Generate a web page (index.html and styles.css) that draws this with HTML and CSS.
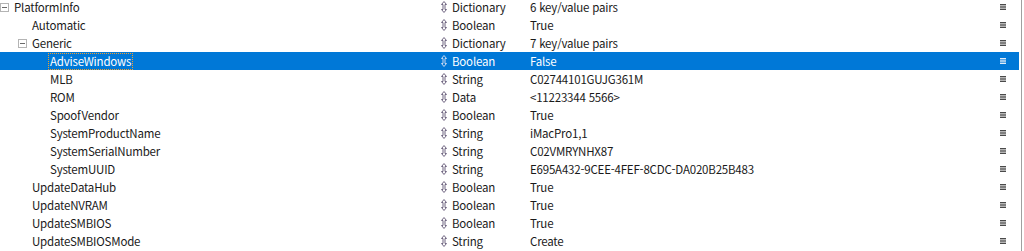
FILE: index.html
```html
<!DOCTYPE html>
<html lang="ko">
<head>
    <meta charset="UTF-8">
    <title>config.plist</title>
    <link rel="stylesheet" href="styles.css">
</head>
<body>
    <div class="tree" id="tree"></div>

    <svg width="0" height="0" class="defs">
        <symbol id="updown" viewBox="0 0 6 12">
            <path d="M3 0.5 L5.5 3.5 L4 3.5 L4 8.5 L5.5 8.5 L3 11.5 L0.5 8.5 L2 8.5 L2 3.5 L0.5 3.5 Z" fill="none" stroke="currentColor" stroke-width="1"/>
        </symbol>
        <symbol id="menu" viewBox="0 0 6 6">
            <rect x="0" y="0" width="6" height="1.4" fill="currentColor"/>
            <rect x="0" y="2.3" width="6" height="1.4" fill="currentColor"/>
            <rect x="0" y="4.6" width="6" height="1.4" fill="currentColor"/>
        </symbol>
    </svg>

    <script>
        const rows = [
            { key: 'PlatformInfo', level: 0, open: true, type: 'Dictionary', value: '6 key/value pairs' },
            { key: 'Automatic', level: 1, type: 'Boolean', value: 'True' },
            { key: 'Generic', level: 1, open: true, type: 'Dictionary', value: '7 key/value pairs' },
            { key: 'AdviseWindows', level: 2, type: 'Boolean', value: 'False', selected: true },
            { key: 'MLB', level: 2, type: 'String', value: 'C02744101GUJG361M' },
            { key: 'ROM', level: 2, type: 'Data', value: '<11223344 5566>' },
            { key: 'SpoofVendor', level: 2, type: 'Boolean', value: 'True' },
            { key: 'SystemProductName', level: 2, type: 'String', value: 'iMacPro1,1' },
            { key: 'SystemSerialNumber', level: 2, type: 'String', value: 'C02VMRYNHX87' },
            { key: 'SystemUUID', level: 2, type: 'String', value: 'E695A432-9CEE-4FEF-8CDC-DA020B25B483' },
            { key: 'UpdateDataHub', level: 1, type: 'Boolean', value: 'True' },
            { key: 'UpdateNVRAM', level: 1, type: 'Boolean', value: 'True' },
            { key: 'UpdateSMBIOS', level: 1, type: 'Boolean', value: 'True' },
            { key: 'UpdateSMBIOSMode', level: 1, type: 'String', value: 'Create' }
        ];

        const tree = document.getElementById('tree');

        rows.forEach(r => {
            const row = document.createElement('div');
            row.className = 'row' + (r.selected ? ' selected' : '');

            const toggle = r.open !== undefined ? '<span class="toggle"></span>' : '<span class="toggle empty"></span>';
            const label = r.selected ? `<span class="focus">${r.key}</span>` : r.key;

            row.innerHTML = `
                <div class="name lvl${r.level}">${toggle}${label}</div>
                <div class="type"><svg class="updown"><use href="#updown"/></svg>${r.type}</div>
                <div class="value"></div>
                <div class="menu"><svg class="menu-icon"><use href="#menu"/></svg></div>
            `;
            row.querySelector('.value').textContent = r.value;
            tree.appendChild(row);
        });
    </script>
</body>
</html>
```

FILE: styles.css
```css
body {
    margin: 0;
    background: #ffffff;
    font-family: "Noto Sans CJK KR", "Noto Sans", sans-serif;
    font-size: 11.5px;
    letter-spacing: -0.2px;
    color: #1a1a1a;
    overflow: hidden;
}

.defs {
    position: absolute;
}

.tree {
    width: 1021px;
    height: 260px;
    margin-top: -2px;
    border-right: 1px solid #a0a0a0;
}

.row {
    display: grid;
    grid-template-columns: 441px 89px 1fr 22px;
    height: 18px;
    align-items: center;
    width: 1019px;
    white-space: nowrap;
}

.row.selected {
    background-color: #0078d7;
    color: #ffffff;
}

.name {
    display: flex;
    align-items: center;
}

.lvl0 { padding-left: 0; }
.lvl1 { padding-left: 18px; }
.lvl2 { padding-left: 36px; }

.toggle {
    width: 7px;
    height: 7px;
    border: 1px solid #b4b4b4;
    margin-right: 5px;
    position: relative;
    flex: none;
}

.toggle::after {
    content: "";
    position: absolute;
    left: 1px;
    top: 3px;
    width: 5px;
    height: 1px;
    background: #6a6a6a;
}

.toggle.empty {
    border-color: transparent;
}

.toggle.empty::after {
    display: none;
}

.focus {
    outline: 1px dotted #f0a030;
    padding: 0 1px;
    margin-left: -1px;
    line-height: 15px;
}

.type {
    display: flex;
    align-items: center;
}

.updown {
    width: 6px;
    height: 12px;
    margin-right: 5px;
    color: #6f6580;
}

.selected .updown {
    color: #c8d8f0;
}

.menu {
    display: flex;
    align-items: center;
    padding-left: 3px;
}

.menu-icon {
    width: 6px;
    height: 6px;
    color: #4a4a4a;
}

.selected .menu-icon {
    color: #e0ecf8;
}
```
